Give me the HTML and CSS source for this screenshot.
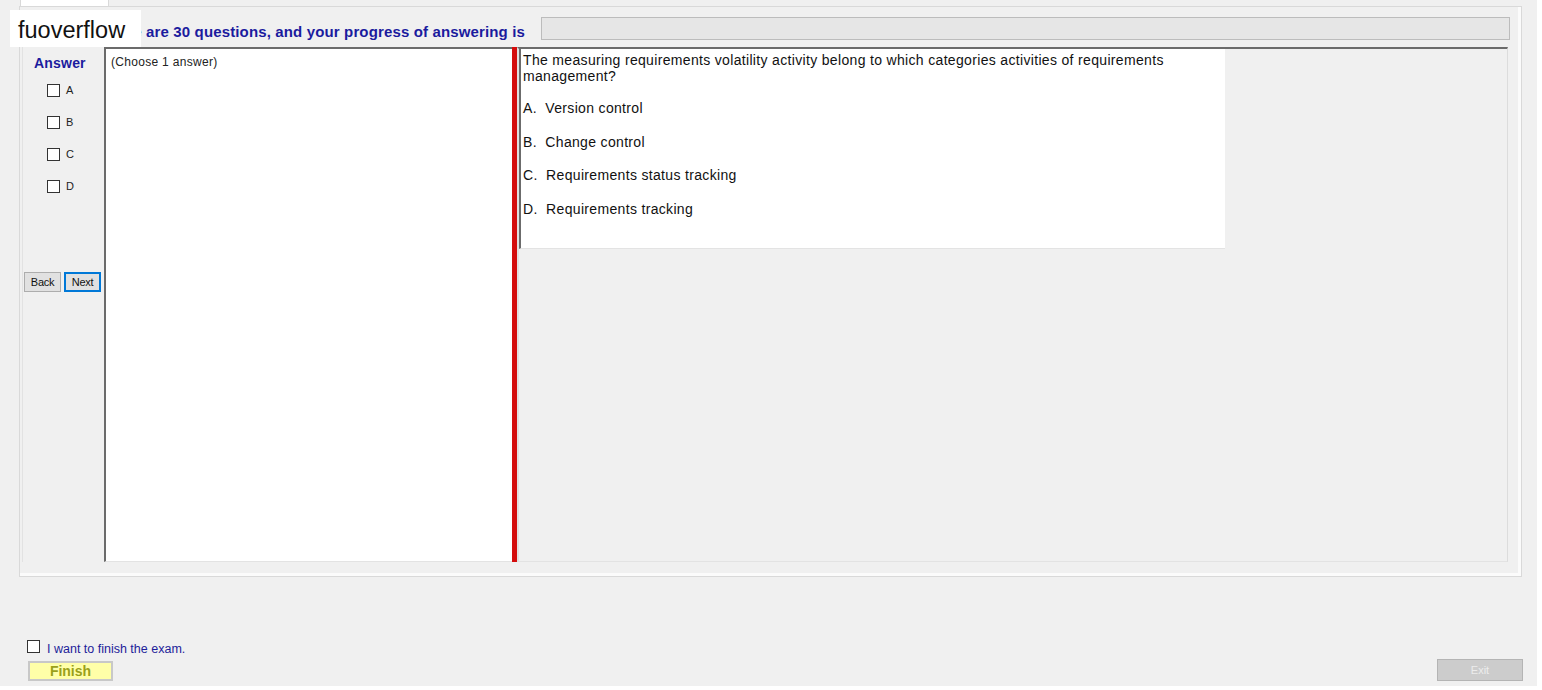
FILE: index.html
```html
<!DOCTYPE html>
<html lang="en">
<head>
    <meta charset="UTF-8">
    <title>Exam</title>
    <link rel="stylesheet" href="styles.css">
</head>
<body>

<div class="window">
    <div class="tabs">
        <div class="tab"></div>
    </div>

    <div class="tabpage">
        <div class="progress-row">
            <div class="progress-label">There are 30 questions, and your progress of answering is</div>
            <div class="progress-bar"></div>
        </div>

        <div class="exam">
            <div class="answer-col">
                <div class="answer-title">Answer</div>
                <label class="option"><span class="check"></span>A</label>
                <label class="option"><span class="check"></span>B</label>
                <label class="option"><span class="check"></span>C</label>
                <label class="option"><span class="check"></span>D</label>
                <div class="nav">
                    <button class="btn">Back</button>
                    <button class="btn btn-focus">Next</button>
                </div>
            </div>

            <div class="choose-box">(Choose 1 answer)</div>

            <div class="splitter"></div>

            <div class="question-area">
                <div class="question">
                    <p class="question-text">The measuring requirements volatility activity belong to which categories activities of requirements management?</p>
                    <p>A.&nbsp; Version control</p>
                    <p>B.&nbsp; Change control</p>
                    <p>C.&nbsp; Requirements status tracking</p>
                    <p>D.&nbsp; Requirements tracking</p>
                </div>
            </div>
        </div>
    </div>

    <div class="footer">
        <div class="finish-box">
            <label class="finish-check"><span class="check"></span>I want to finish the exam.</label>
            <button class="btn-finish">Finish</button>
        </div>
        <button class="btn-exit" disabled>Exit</button>
    </div>

    <div class="watermark">fuoverflow</div>
</div>

</body>
</html>
```

FILE: styles.css
```css
body {
    margin: 0;
    background: #fff;
    font-family: "Liberation Sans", Arial, sans-serif;
}
.window {
    position: relative;
    display: flex;
    flex-direction: column;
    width: 1537px;
    height: 686px;
    background: #f0f0f0;
}
.tabs {
    height: 6px;
    padding-left: 20px;
}
.tab {
    width: 89px;
    height: 6px;
    background: #fff;
    border: 1px solid #d9d9d9;
    border-top: 0;
    border-bottom: 0;
    box-sizing: border-box;
}
.tabpage {
    margin-left: 19px;
    width: 1503px;
    height: 571px;
    box-sizing: border-box;
    border: 1px solid #d9d9d9;
    box-shadow: inset 0 -3px 0 #fbfbfb, inset -3px 0 0 #fbfbfb;
    padding: 10px 12px 0 2px;
}
.progress-row {
    display: flex;
    align-items: center;
    height: 23px;
    margin-bottom: 7px;
    width: 1488px;
}
.progress-label {
    flex: 1;
    text-align: right;
    margin-right: 16px;
    font-size: 15px;
    font-weight: bold;
    letter-spacing: 0.14px;
    color: #1b1b9e;
    padding-top: 6px;
    white-space: nowrap;
}
.progress-bar {
    width: 969px;
    height: 23px;
    box-sizing: border-box;
    background: #e6e6e6;
    border: 1px solid #bcbcbc;
}

.exam {
    display: flex;
    height: 515px;
    width: 1486px;
}
.answer-col {
    width: 82px;
    display: flex;
    flex-direction: column;
    border-left: 1px solid #e2e2e2;
    box-sizing: border-box;
}
.answer-title {
    margin-top: 8px;
    padding-left: 11px;
    font-size: 14px;
    font-weight: bold;
    letter-spacing: 0.2px;
    color: #1b1b9e;
    line-height: 16px;
}
.option {
    display: flex;
    align-items: center;
    height: 14px;
    margin-top: 18px;
    padding-left: 24px;
    font-size: 11px;
    color: #222;
}
.answer-title + .option {
    margin-top: 12px;
}
.check {
    display: inline-block;
    width: 13px;
    height: 13px;
    box-sizing: border-box;
    border: 1px solid #333;
    background: #fff;
    margin-right: 6px;
}
.nav {
    display: flex;
    gap: 3px;
    margin-top: 79px;
    padding-left: 1px;
}
.btn {
    width: 37px;
    height: 20px;
    padding: 0;
    font-family: "Liberation Sans", Arial, sans-serif;
    font-size: 11px;
    color: #111;
    background: #e1e1e1;
    border: 1px solid #adadad;
    letter-spacing: -0.3px;
}
.btn-focus {
    border: 2px solid #0078d7;
}

.choose-box {
    width: 408px;
    box-sizing: border-box;
    background: #fff;
    border-top: 2px solid #6b6b6b;
    border-left: 2px solid #6b6b6b;
    border-bottom: 1px solid #e3e3e3;
    padding: 6px 5px;
    font-size: 12px;
    letter-spacing: 0.3px;
    line-height: 14px;
    color: #222;
}
.splitter {
    width: 5px;
    background: #d40d0d;
}
.question-area {
    flex: 1;
    box-sizing: border-box;
    border-top: 2px solid #6b6b6b;
    border-left: 2px solid #e0e0e0;
    border-right: 1px solid #dcdcdc;
    border-bottom: 1px solid #e3e3e3;
}
.question {
    width: 706px;
    height: 200px;
    box-sizing: border-box;
    background: #fff;
    border-left: 2px solid #6b6b6b;
    border-bottom: 1px solid #e3e3e3;
    padding: 3px 0 0 2px;
    font-size: 14px;
    letter-spacing: 0.33px;
    line-height: 16px;
    color: #111;
}
.question p {
    margin: 17.5px 0 0;
}
.question p.question-text {
    margin: 0 0 -1.5px;
    width: 680px;
}

.footer {
    margin-top: auto;
    display: flex;
    justify-content: space-between;
    align-items: flex-end;
    padding: 0 14px 5px 27px;
}
.finish-box {
    display: flex;
    flex-direction: column;
    gap: 4px;
}
.finish-check {
    display: flex;
    align-items: center;
    height: 16px;
    font-size: 12.5px;
    color: #1e1e9a;
}
.finish-check .check {
    margin-right: 7px;
    position: relative;
    top: -3px;
}
.btn-finish {
    margin-left: 1px;
    width: 85px;
    height: 20px;
    padding: 0;
    background: #ffffa8;
    border: 2px solid #c8c8c8;
    font-family: "Liberation Sans", Arial, sans-serif;
    font-size: 14px;
    font-weight: bold;
    color: #9aa01a;
}
.btn-exit {
    width: 86px;
    height: 22px;
    padding: 0;
    background: #cccccc;
    border: 1px solid #b4b4b4;
    font-family: "Liberation Sans", Arial, sans-serif;
    font-size: 11px;
    color: #ececec;
}

.watermark {
    position: absolute;
    left: 10px;
    top: 10px;
    width: 131px;
    height: 37px;
    background: #fff;
    box-sizing: border-box;
    padding: 7px 0 0 8px;
    font-size: 23.5px;
    line-height: 26px;
    color: #111;
}
```
